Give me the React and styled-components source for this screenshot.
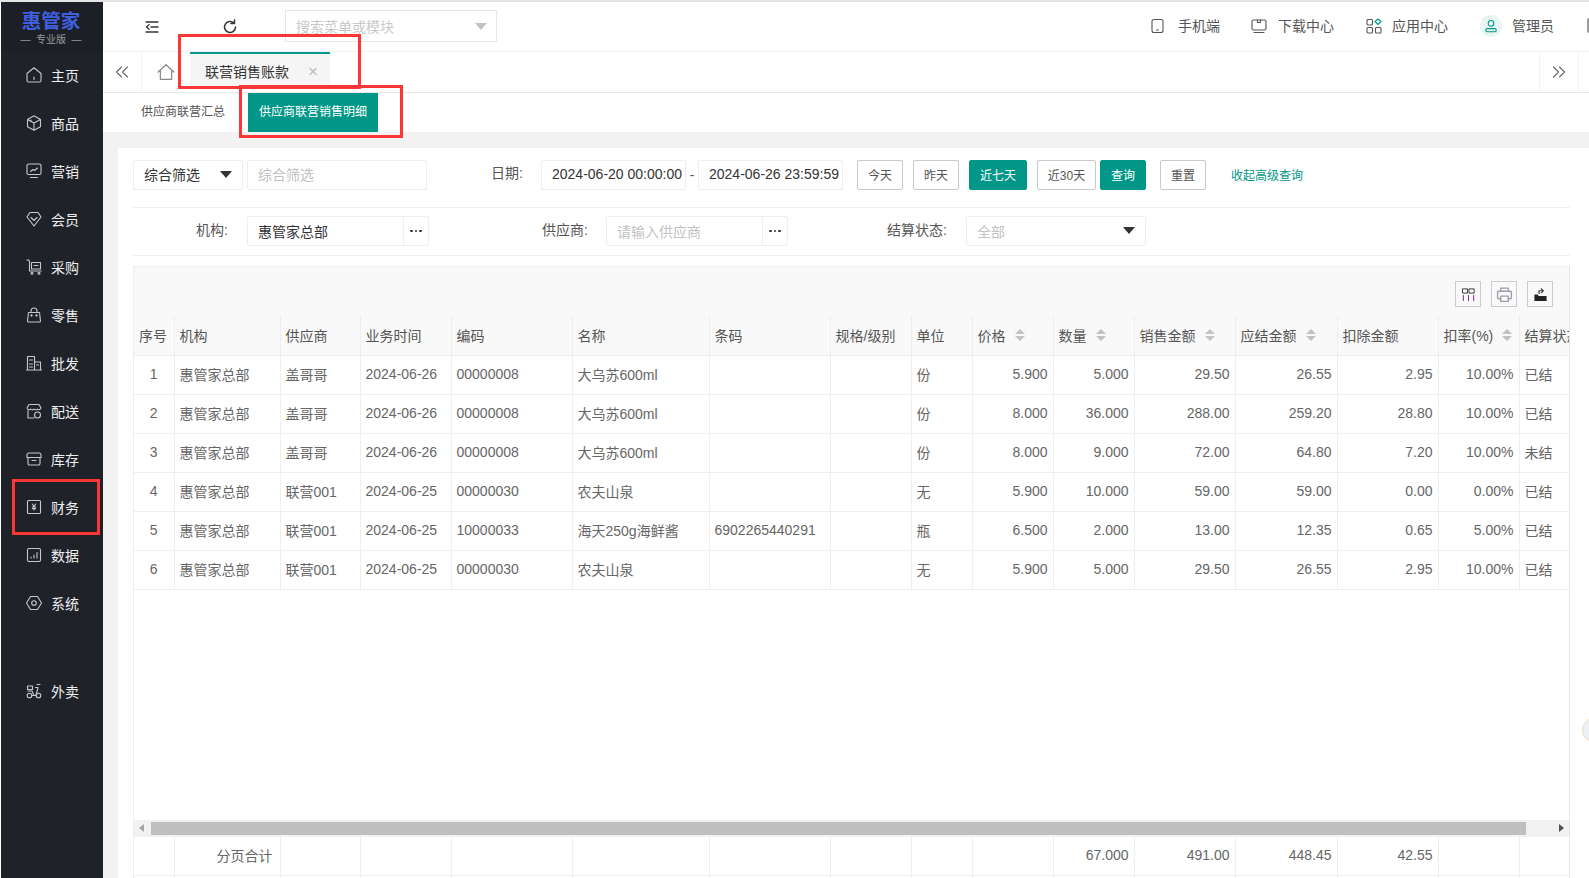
import React from 'react'
import styled, { createGlobalStyle } from 'styled-components'

const TEAL = '#009688'

const Global = createGlobalStyle`
  html, body { margin: 0; padding: 0; height: 100%; overflow: hidden; }
  body { font-family: "Liberation Sans", "Noto Sans CJK SC", sans-serif; font-size: 14px; color: #555; background: #fff; }
  * { box-sizing: border-box; }
`
const Page = styled.div`
  position: relative;
  width: 1589px;
  height: 878px;
  overflow: hidden;
  display: flex;
  padding: 2px 0 0 1px;
  background: #fff;
  &::before {
    content: '';
    position: absolute;
    left: 0;
    top: 0;
    width: 100%;
    height: 2px;
    background: #e4e4e4;
  }
`
const Side = styled.aside`
  width: 102px;
  flex: none;
  background: #20222a;
  display: flex;
  flex-direction: column;
`
const Logo = styled.div`
  height: 49px;
  display: flex;
  flex-direction: column;
  align-items: center;
  padding: 8px 2px 0 0;
  background: #1d1f26;
`
const LogoName = styled.div`
  font-size: 19.5px;
  line-height: 23px;
  font-weight: 700;
  color: #3f5fe0;
`
const LogoSub = styled.div`
  font-size: 10px;
  line-height: 13px;
  color: #999;
  white-space: pre;
`
const NavItem = styled.div`
  height: 48px;
  display: flex;
  align-items: center;
  padding-left: 25px;
  gap: 9px;
  color: #eee;
  font-size: 14px;
  margin-top: ${p => p.$gap || 0}px;
  & svg { flex: none; }
`
const Main = styled.main`
  flex: 1;
  min-width: 0;
  display: flex;
  flex-direction: column;
  background: #f2f2f2;
`
const TopBar = styled.header`
  height: 50px;
  background: #fff;
  display: flex;
  align-items: center;
  border-bottom: 1px solid #f2f2f2;
  flex: none;
`
const BarBtn = styled.div`
  width: ${p => p.$w}px;
  margin-left: ${p => p.$ml || 0}px;
  display: flex;
  justify-content: center;
  color: #333;
  flex: none;
`
const SearchBox = styled.div`
  width: 212px;
  height: 32px;
  border: 1px solid #e6e6e6;
  display: flex;
  align-items: center;
  justify-content: space-between;
  padding: 0 9px 0 10px;
  color: #c9c9c9;
  font-size: 14px;
  margin-left: 28px;
  margin-top: -1px;
`
const Caret = styled.i`
  width: 0;
  height: 0;
  flex: none;
  border-left: 6.5px solid transparent;
  border-right: 6.5px solid transparent;
  border-top: 7px solid ${p => p.$color || '#333'};
`
const TopRight = styled.div`
  margin-left: auto;
  display: flex;
  align-items: center;
  color: #555;
  font-size: 14px;
`
const TopLink = styled.div`
  display: flex;
  align-items: center;
  gap: ${p => p.$gap}px;
  margin-right: ${p => p.$mr}px;
  line-height: 20px;
  padding-bottom: 1px;
`
const Avatar = styled.span`
  width: 22px;
  height: 22px;
  border-radius: 50%;
  background: #e9f5f3;
  display: flex;
  align-items: center;
  justify-content: center;
`
const EdgeIcon = styled.span`
  width: 2px;
  height: 15px;
  border-radius: 2px 0 0 2px;
  background: #999;
  margin-bottom: 2px;
`
const TabBar = styled.div`
  height: 41px;
  background: #fff;
  display: flex;
  align-items: stretch;
  flex: none;
  border-bottom: 1px solid #e9e9e9;
`
const TabCell = styled.div`
  width: ${p => p.$w}px;
  flex: none;
  display: flex;
  align-items: center;
  justify-content: center;
  color: #666;
  border-right: ${p => (p.$r ? '1px solid #f2f2f2' : '0')};
  border-left: ${p => (p.$l ? '1px solid #f2f2f2' : '0')};
  margin-left: ${p => (p.$end ? 'auto' : '0')};
  margin-right: ${p => (p.$end ? '10px' : '0')};
`
const ActiveTab = styled.div`
  width: 140px;
  flex: none;
  background: #f5f5f5;
  height: 34px;
  border-top: 2px solid ${TEAL};
  display: flex;
  align-items: center;
  justify-content: space-between;
  padding: 2px 12px 0 15px;
  color: #333;
  font-size: 14px;
`
const TabClose = styled.span`
  color: #bbb;
  font-size: 17px;
  line-height: 1;
`
const SubTabs = styled.div`
  height: 39px;
  background: #fff;
  display: flex;
  flex: none;
  padding-left: 27px;
`
const SubTab = styled.div`
  height: 39px;
  padding: 0 11px 4px;
  display: flex;
  align-items: center;
  font-size: 12px;
  color: ${p => (p.$on ? '#fff' : '#555')};
  background: ${p => (p.$on ? TEAL : 'transparent')};
  margin-left: ${p => p.$ml || 0}px;
`
const Card = styled.section`
  flex: 1;
  min-height: 0;
  margin: 16px 0 0 15px;
  background: #fff;
  padding: 12px 0 0 15px;
  display: flex;
  flex-direction: column;
`
const FilterRow = styled.div`
  display: flex;
  align-items: center;
  height: ${p => p.$h}px;
  padding-bottom: ${p => p.$pb}px;
  margin-bottom: ${p => p.$mb}px;
  border-bottom: 1px solid #eee;
  flex: none;
  width: 1437px;
`
const Label = styled.span`
  width: ${p => p.$w}px;
  margin-left: ${p => p.$ml || 0}px;
  text-align: right;
  flex: none;
  color: #555;
  font-size: 14px;
  margin-top: -5px;
  white-space: nowrap;
`
const Field = styled.div`
  width: ${p => p.$w}px;
  height: 30px;
  margin-left: ${p => p.$ml || 0}px;
  flex: none;
  border: 1px solid #eee;
  border-radius: 2px;
  display: flex;
  align-items: center;
  justify-content: space-between;
  padding: 0 10px 1px;
  font-size: 14px;
  white-space: nowrap;
  color: ${p => (p.$ph ? '#c2c2c2' : '#333')};
`
const PickField = styled(Field)`
  padding: 0 0 0 10px;
`
const Dots = styled.span`
  width: 25px;
  height: 100%;
  border-left: 1px solid #eee;
  display: flex;
  align-items: center;
  justify-content: center;
  gap: 2px;
  & i {
    width: 2.5px;
    height: 2.5px;
    border-radius: 50%;
    background: #333;
  }
`
const Dash = styled.span`
  width: 12px;
  text-align: center;
  color: #555;
`
const QuickBtn = styled.button`
  width: ${p => p.$w}px;
  height: 30px;
  margin-left: ${p => p.$ml || 0}px;
  flex: none;
  padding: 0;
  border: 1px solid ${p => (p.$on ? TEAL : '#c9c9c9')};
  border-radius: 2px;
  background: ${p => (p.$on ? TEAL : '#fff')};
  color: ${p => (p.$on ? '#fff' : '#555')};
  font: 12px "Liberation Sans", "Noto Sans CJK SC", sans-serif;
`
const MoreLink = styled.a`
  margin-left: 25px;
  color: ${TEAL};
  font-size: 12px;
`
const TableBox = styled.div`
  width: 1437px;
  height: 650px;
  flex: none;
  border: 1px solid #eee;
  border-right-color: #e6e6e6;
  display: flex;
  flex-direction: column;
  overflow: hidden;
`
const ToolRow = styled.div`
  height: 49px;
  flex: none;
  background: #f9f9f9;
  display: flex;
  align-items: center;
  justify-content: flex-end;
  gap: 10px;
  padding: 5px 16px 0 0;
`
const ToolBtn = styled.span`
  width: 26px;
  height: 26px;
  border: 1px solid #ccc;
  display: flex;
  align-items: center;
  justify-content: center;
`
const Grid = styled.table`
  width: 1440px;
  table-layout: fixed;
  border-collapse: collapse;
  flex: none;
`
const HeadCell = styled.th`
  height: 39px;
  padding: 0 5px;
  font-weight: 400;
  text-align: left;
  color: #555;
  font-size: 14px;
  white-space: nowrap;
  overflow: hidden;
  border: 1px solid #eee;
  border-top: 0;
  border-left: 0;
  background: #f9f9f9;
`
const Cell = styled.td`
  height: 39px;
  padding: 0 ${p => p.$pr || 5}px 1px 5px;
  text-align: ${p => p.$align || 'left'};
  color: #666;
  font-size: 14px;
  white-space: nowrap;
  overflow: hidden;
  border-right: 1px solid #eee;
  border-bottom: 1px solid #eee;
`
const HeadInner = styled.div`
  display: flex;
  align-items: center;
  gap: 9px;
`
const Sort = styled.span`
  display: inline-flex;
  flex-direction: column;
  gap: 2px;
  & i {
    width: 0;
    height: 0;
    border-left: 5px solid transparent;
    border-right: 5px solid transparent;
  }
  & i:first-child { border-bottom: 5px solid #c2c2c2; }
  & i:last-child { border-top: 5px solid #c2c2c2; }
`
const Spacer = styled.div`
  flex: 1;
  min-height: 0;
`
const ScrollBar = styled.div`
  height: 17px;
  flex: none;
  background: #f1f1f1;
  display: flex;
  align-items: center;
  padding: 0 5px;
  justify-content: space-between;
  position: relative;
`
const Thumb = styled.div`
  position: absolute;
  left: 17px;
  top: 2px;
  width: 1375px;
  height: 13px;
  background: #bfbfbf;
`
const Arrow = styled.i`
  width: 0;
  height: 0;
  border-top: 4px solid transparent;
  border-bottom: 4px solid transparent;
  ${p => (p.$right ? 'border-left: 5px solid #505050;' : 'border-right: 5px solid #a3a3a3;')}
`
const Mark = styled.div`
  position: absolute;
  left: ${p => p.$x}px;
  top: ${p => p.$y}px;
  width: ${p => p.$w}px;
  height: ${p => p.$h}px;
  border: 3px solid #fb3636;
  pointer-events: none;
`
const Ball = styled.div`
  position: absolute;
  left: 1582px;
  top: 717px;
  width: 26px;
  height: 26px;
  border-radius: 50%;
  background: #eef0f6;
  border: 1px solid #f6dcc0;
`

const Ic = ({ children, s = 16, c = '#c8c8c8', w = 1.1 }) => (
  <svg width={s} height={s} viewBox="0 0 16 16" fill="none" stroke={c} strokeWidth={w} strokeLinejoin="round" strokeLinecap="round">
    {children}
  </svg>
)

const navIcons = {
  home: <path d="M1 6.500 8 .8l7 5.700V13.500a1.500 1.500 0 0 1-1.500 1.500h-11A1.500 1.500 0 0 1 1 13.500zM8 10v2.500" />,
  box: <path d="M8 .8l6.500 3.700v7.200L8 15.200l-6.500-3.500V4.500zM1.500 4.500 8 8l6.500-3.500M8 8v7M4 6l1 .5V5" />,
  chart: <><rect x="1" y="1" width="14" height="10.500" rx="1.500" /><path d="M4.500 8.500l2.500-2 1.500 1L11.500 5M4.500 14.500h7" /></>,
  vip: <path d="M4.500 1.500h7a1 1 0 0 1 .8.400L15 6 8 15 1 6l2.700-4.100a1 1 0 0 1 .8-.400zM5 6.500l3 3 3-3" />,
  cart: <><path d="M.8 1h2l.7 1.500V12h11.700M5.500 3.500h9v6.500h-9zM8 6.500h4" /><circle cx="6" cy="14.300" r="1" /><circle cx="13" cy="14.300" r="1" /></>,
  bag: <><path d="M2.500 5.500h11l1 8.500a1 1 0 0 1-1 1h-11a1 1 0 0 1-1-1zM5 5.500V4a3 3 0 0 1 6 0v1.500" /><circle cx="5.500" cy="8.500" r=".6" /><circle cx="10.500" cy="8.500" r=".6" /></>,
  build: <path d="M1.500 15V1.500h7V15M8.500 7h6v8M.5 15h15M3.500 5h3M3.500 9h3M3.500 12h3M10.500 10h2" />,
  shop: <><path d="M3 1.500h10l2 3.500a2 2 0 0 1-3.500 1 2.200 2.200 0 0 1-3.500 0 2.200 2.200 0 0 1-3.500 0A2 2 0 0 1 1 5zM2 7.500V15h6" /><circle cx="11.500" cy="12" r="3" /></>,
  stock: <><path d="M1 6.500V4a2 2 0 0 1 2-2h10a2 2 0 0 1 2 2v2.500zM2 6.500V12.500a1.500 1.500 0 0 0 1.500 1.500h9a1.500 1.500 0 0 0 1.500-1.500V6.500M6 9.500h4" /></>,
  money: <><rect x="1.500" y="1.500" width="13" height="13" rx="1" /><path d="M6.300 5 8 7.500 9.700 5M8 7.500V11M6.300 8h3.400M6.300 9.600h3.400" /></>,
  data: <><rect x="1.500" y="1.500" width="13" height="13" rx="1.500" /><path d="M5 11v-1M8 11V8M11 11V5.500" /></>,
  gear: <><path d="M4.500 1.500h7L15.500 8l-4 6.500h-7L.5 8z" /><circle cx="8" cy="8" r="2.300" /></>,
  bike: <><circle cx="3.500" cy="12.500" r="2.300" /><circle cx="12.500" cy="12.500" r="2.300" /><path d="M1.500 3h5v3.500h-5zM6 12.500h4l2-8h-2.500M2 8h4l2 4.500M11 1.500h3" /></>,
}
const nav = [
  ['home', '主页'], ['box', '商品'], ['chart', '营销'], ['vip', '会员'], ['cart', '采购'], ['bag', '零售'],
  ['build', '批发'], ['shop', '配送'], ['stock', '库存'], ['money', '财务'], ['data', '数据'], ['gear', '系统'],
]

const cols = [40, 106, 80, 91, 121, 137, 121, 81, 61, 81, 81, 101, 102, 101, 81, 55]
const heads = [
  ['序号'], ['机构'], ['供应商'], ['业务时间'], ['编码'], ['名称'], ['条码'], ['规格/级别'], ['单位'],
  ['价格', 1], ['数量', 1], ['销售金额', 1], ['应结金额', 1], ['扣除金额'], ['扣率(%)', 1], ['结算状态'],
]
const rows = [
  ['1', '盖哥哥', '2024-06-26', '00000008', '大乌苏600ml', '', '份', '5.900', '5.000', '29.50', '26.55', '2.95', '10.00%', '已结'],
  ['2', '盖哥哥', '2024-06-26', '00000008', '大乌苏600ml', '', '份', '8.000', '36.000', '288.00', '259.20', '28.80', '10.00%', '已结'],
  ['3', '盖哥哥', '2024-06-26', '00000008', '大乌苏600ml', '', '份', '8.000', '9.000', '72.00', '64.80', '7.20', '10.00%', '未结'],
  ['4', '联营001', '2024-06-25', '00000030', '农夫山泉', '', '无', '5.900', '10.000', '59.00', '59.00', '0.00', '0.00%', '已结'],
  ['5', '联营001', '2024-06-25', '10000033', '海天250g海鲜酱', '6902265440291', '瓶', '6.500', '2.000', '13.00', '12.35', '0.65', '5.00%', '已结'],
  ['6', '联营001', '2024-06-25', '00000030', '农夫山泉', '', '无', '5.900', '5.000', '29.50', '26.55', '2.95', '10.00%', '已结'],
]

const Cols = () => (
  <colgroup>
    {cols.map((w, i) => <col key={i} style={{ width: w }} />)}
  </colgroup>
)

export default function App() {
  return (
    <Page>
      <Global />
      <Side>
        <Logo>
          <LogoName>惠管家</LogoName>
          <LogoSub>{'—  专业版  —'}</LogoSub>
        </Logo>
        <nav>
          {nav.map(([icon, text]) => (
            <NavItem key={text}>
              <Ic>{navIcons[icon]}</Ic>
              <span>{text}</span>
            </NavItem>
          ))}
          <NavItem $gap={40}>
            <Ic>{navIcons.bike}</Ic>
            <span>外卖</span>
          </NavItem>
        </nav>
      </Side>
      <Main>
        <TopBar>
          <BarBtn $w={100} $ml={-1}>
            <Ic c="#333" w={1.3}><path d="M2 3h12M7 8h7M2 13h12M5 5.800 2.500 8 5 10.200" /></Ic>
          </BarBtn>
          <BarBtn $w={54} $ml={1}>
            <Ic c="#333" w={1.5}><path d="M13.500 8a5.500 5.500 0 1 1-1.700-4M12.500 1v3.500H9" /></Ic>
          </BarBtn>
          <SearchBox>
            搜索菜单或模块
            <Caret $color="#c2c2c2" />
          </SearchBox>
          <TopRight>
            <TopLink $gap={13} $mr={31}>
              <Ic c="#555"><rect x="3" y="1.500" width="11" height="13" rx="2" /><path d="M7.500 12h2" /></Ic>
              手机端
            </TopLink>
            <TopLink $gap={11} $mr={32}>
              <Ic c="#555"><rect x="1" y="2" width="14" height="10" rx="1.500" /><path d="M3 14.500h10M6.500 2v2.500h3V2" /></Ic>
              下载中心
            </TopLink>
            <TopLink $gap={10} $mr={32}>
              <Ic c="#555">
                <rect x="1" y="1.500" width="5.500" height="5.500" rx="1" />
                <rect x="1" y="9.500" width="5.500" height="5.500" rx="1" />
                <rect x="9.500" y="9.500" width="5.500" height="5.500" rx="1" />
                <path d="M12 1l3 2.500L12 6.500 9 3.500z" stroke={TEAL} />
              </Ic>
              应用中心
            </TopLink>
            <TopLink $gap={10} $mr={33}>
              <Avatar>
                <Ic s={14} c={TEAL} w={1.2}><circle cx="8" cy="5" r="3.200" /><rect x="2" y="11" width="12" height="3.500" rx="1.700" /></Ic>
              </Avatar>
              管理员
            </TopLink>
            <EdgeIcon />
          </TopRight>
        </TopBar>
        <TabBar>
          <TabCell $w={39} $r>
            <Ic c="#666"><path d="M7.500 3 2.500 8l5 5M13.500 3l-5 5 5 5" /></Ic>
          </TabCell>
          <TabCell $w={48}>
            <Ic s={18} c="#888"><path d="M1 8 8 1.500 15 8M3 6.500V14.500h10V6.500" /></Ic>
          </TabCell>
          <ActiveTab>
            联营销售账款
            <TabClose>×</TabClose>
          </ActiveTab>
          <TabCell $w={40} $l $r $end>
            <Ic c="#666"><path d="M2.500 3l5 5-5 5M8.500 3l5 5-5 5" /></Ic>
          </TabCell>
        </TabBar>
        <SubTabs>
          <SubTab>供应商联营汇总</SubTab>
          <SubTab $on $ml={12}>供应商联营销售明细</SubTab>
        </SubTabs>
        <Card>
          <FilterRow $h={48} $pb={18} $mb={8}>
            <Field $w={110}>
              综合筛选
              <Caret />
            </Field>
            <Field $w={180} $ml={4} $ph>综合筛选</Field>
            <Label $w={40} $ml={56}>日期:</Label>
            <Field $w={145} $ml={18}>2024-06-20 00:00:00</Field>
            <Dash>-</Dash>
            <Field $w={145}>2024-06-26 23:59:59</Field>
            <QuickBtn $w={46} $ml={14}>今天</QuickBtn>
            <QuickBtn $w={46} $ml={10}>昨天</QuickBtn>
            <QuickBtn $w={58} $ml={10} $on>近七天</QuickBtn>
            <QuickBtn $w={59} $ml={10}>近30天</QuickBtn>
            <QuickBtn $w={46} $ml={4} $on>查询</QuickBtn>
            <QuickBtn $w={46} $ml={14}>重置</QuickBtn>
            <MoreLink>收起高级查询</MoreLink>
          </FilterRow>
          <FilterRow $h={40} $pb={9} $mb={10}>
            <Label $w={95}>机构:</Label>
            <PickField $w={182} $ml={19}>
              惠管家总部
              <Dots><i /><i /><i /></Dots>
            </PickField>
            <Label $w={58} $ml={101}>供应商:</Label>
            <PickField $w={182} $ml={18} $ph>
              请输入供应商
              <Dots><i /><i /><i /></Dots>
            </PickField>
            <Label $w={78} $ml={81}>结算状态:</Label>
            <Field $w={180} $ml={19} $ph>
              全部
              <Caret />
            </Field>
          </FilterRow>
          <TableBox>
            <ToolRow>
              <ToolBtn>
                <Ic s={15} c="#333" w={1}>
                  <path d="M2 2h5v4.500H2zM9 2h5v4.500H9z" />
                  <path d="M2.500 9v5.500M8 9v5.500M13.500 9v5.500" stroke="#7a1d86" />
                </Ic>
              </ToolBtn>
              <ToolBtn>
                <Ic s={17} c="#9aa0a8" w={1.3}>
                  <path d="M4.500 5V2h7v3M4.500 12H2.500a1 1 0 0 1-1-1V6a1 1 0 0 1 1-1h11a1 1 0 0 1 1 1v5a1 1 0 0 1-1 1h-2M4.500 9.500h7v5h-7z" />
                </Ic>
              </ToolBtn>
              <ToolBtn>
                <svg width="15" height="15" viewBox="0 0 16 16">
                  <path d="M1.500 8h3.500l1 1.500h8.500V15H1.500z" fill="#222" />
                  <path d="M6.500 7.500V4h4M8.500 1.500 11 4 8.500 6.500" fill="none" stroke="#444" strokeWidth="1.300" />
                </svg>
              </ToolBtn>
            </ToolRow>
            <Grid>
              <Cols />
              <thead>
                <tr>
                  {heads.map(([text, sort]) => (
                    <HeadCell key={text}>
                      <HeadInner>
                        <span>{text}</span>
                        {sort && <Sort><i /><i /></Sort>}
                      </HeadInner>
                    </HeadCell>
                  ))}
                </tr>
              </thead>
              <tbody>
                {rows.map(r => (
                  <tr key={r[0]}>
                    <Cell $align="center">{r[0]}</Cell>
                    <Cell>惠管家总部</Cell>
                    <Cell>{r[1]}</Cell>
                    <Cell>{r[2]}</Cell>
                    <Cell>{r[3]}</Cell>
                    <Cell>{r[4]}</Cell>
                    <Cell>{r[5]}</Cell>
                    <Cell />
                    <Cell>{r[6]}</Cell>
                    <Cell $align="right">{r[7]}</Cell>
                    <Cell $align="right">{r[8]}</Cell>
                    <Cell $align="right">{r[9]}</Cell>
                    <Cell $align="right">{r[10]}</Cell>
                    <Cell $align="right">{r[11]}</Cell>
                    <Cell $align="right">{r[12]}</Cell>
                    <Cell>{r[13]}</Cell>
                  </tr>
                ))}
              </tbody>
            </Grid>
            <Spacer />
            <ScrollBar>
              <Arrow />
              <Thumb />
              <Arrow $right />
            </ScrollBar>
            <Grid>
              <Cols />
              <tbody>
                <tr>
                  <Cell />
                  <Cell $align="right" $pr={7}>分页合计</Cell>
                  <Cell /><Cell /><Cell /><Cell /><Cell /><Cell /><Cell /><Cell />
                  <Cell $align="right">67.000</Cell>
                  <Cell $align="right">491.00</Cell>
                  <Cell $align="right">448.45</Cell>
                  <Cell $align="right">42.55</Cell>
                  <Cell /><Cell />
                </tr>
                <tr>
                  {cols.map((w, i) => <Cell key={i} />)}
                </tr>
              </tbody>
            </Grid>
          </TableBox>
        </Card>
      </Main>
      <Mark $x={178} $y={34} $w={183} $h={55} />
      <Mark $x={239} $y={85} $w={164} $h={53} />
      <Mark $x={12} $y={479} $w={88} $h={56} />
      <Ball />
    </Page>
  )
}
